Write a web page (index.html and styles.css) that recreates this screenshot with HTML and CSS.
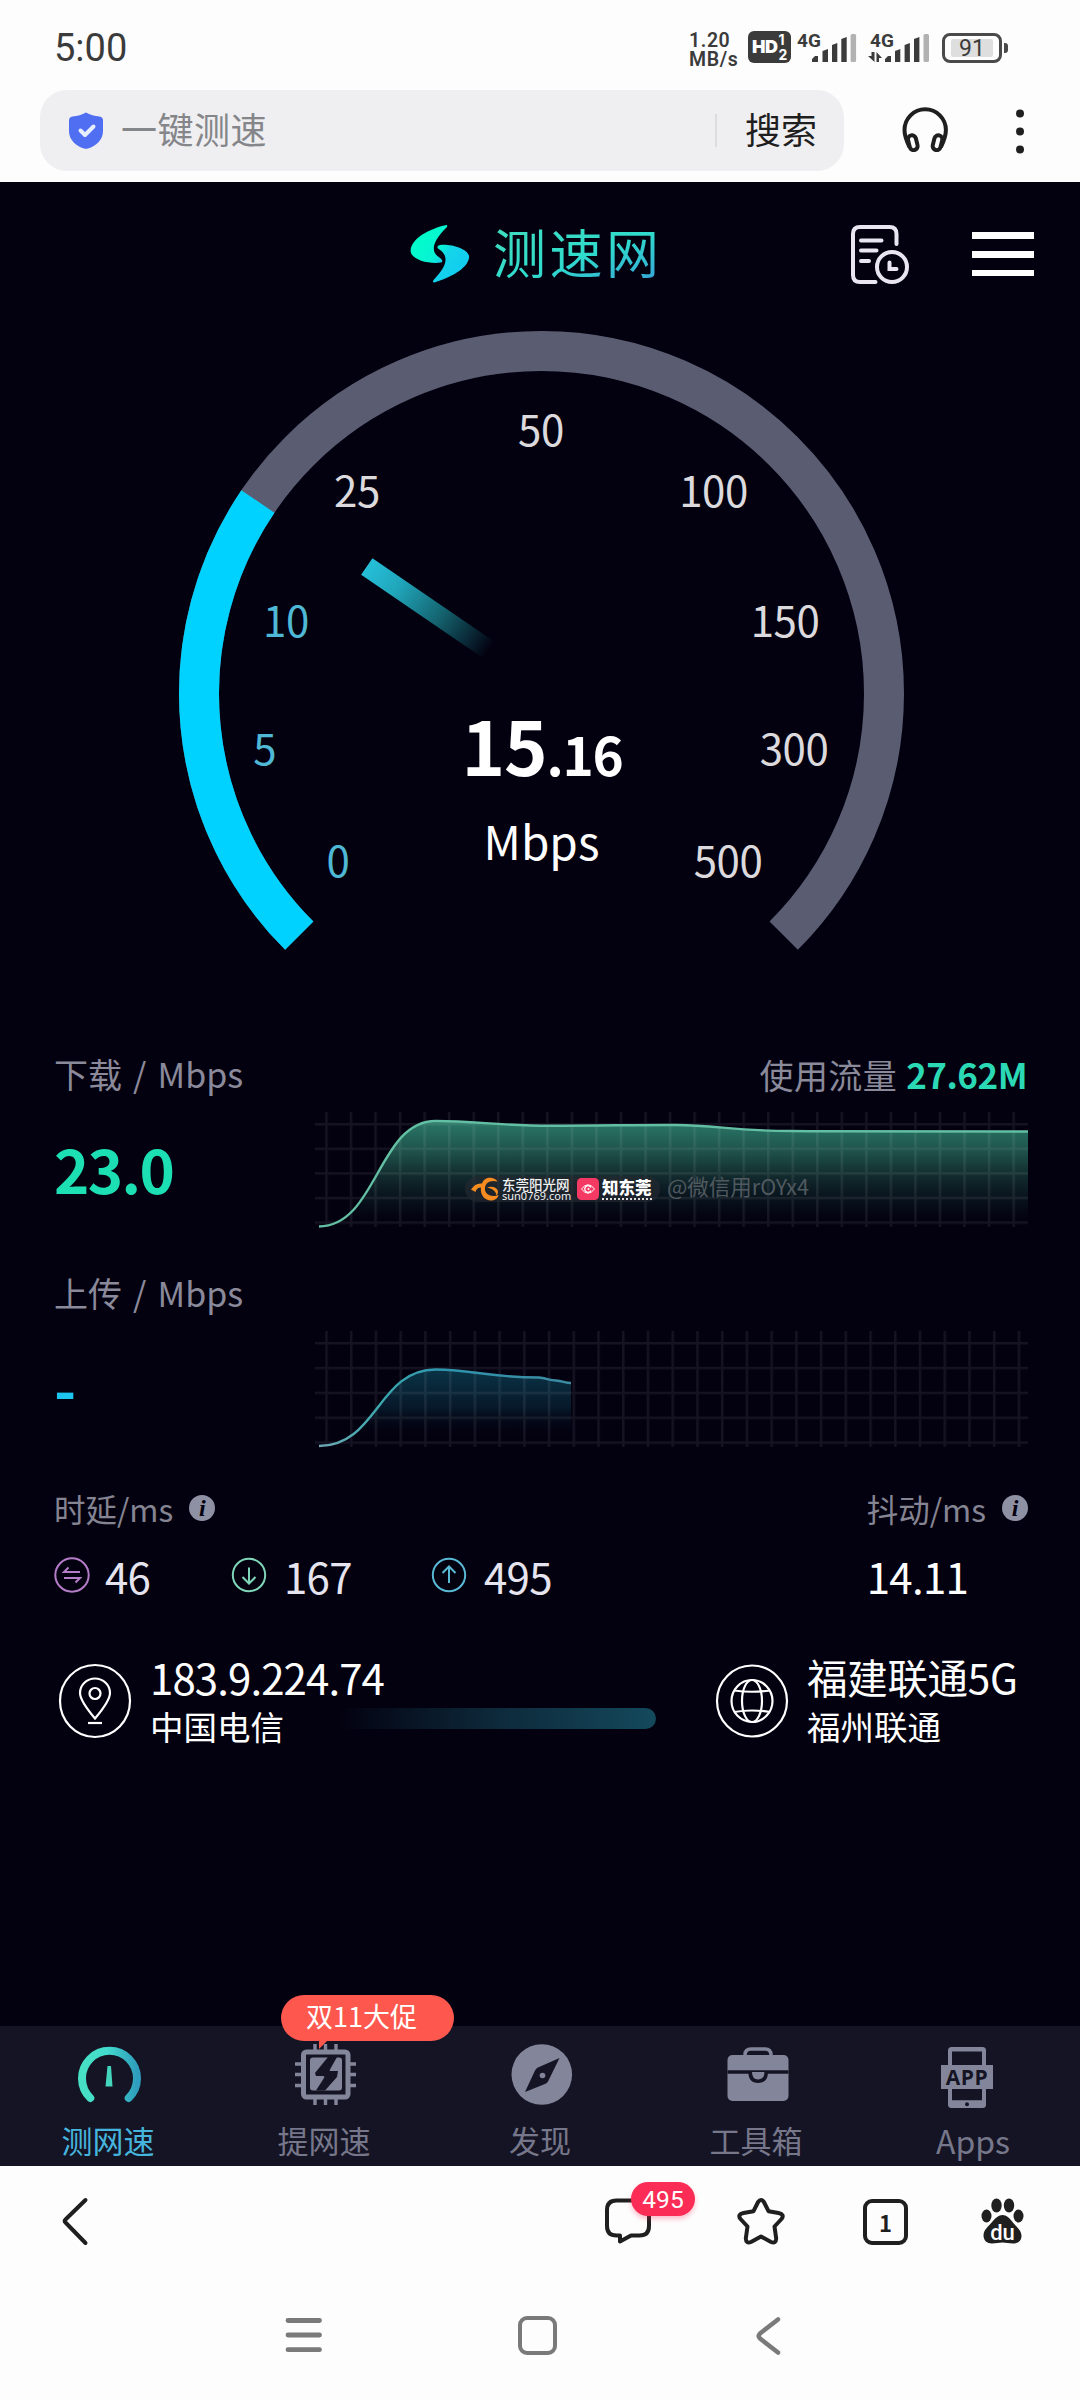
FILE: index.html
```html
<!DOCTYPE html>
<html lang="zh-CN">
<head>
<meta charset="utf-8">
<title>测速网</title>
<link rel="stylesheet" href="styles.css">
</head>
<body>
<div class="status">
  <span class="clock">5:00</span>
  <div class="rate"><span>1.20</span><span>MB/s</span></div>
  <div class="hd"><b>HD</b><div class="hd-n"><i>1</i><i>2</i></div></div>
  <svg class="sig" width="60" height="32" viewBox="797 31 60 32">
    <text x="797" y="46.500" class="net">4G</text>
    <g fill="#3b3b3b"><path d="M812 62v-3l3-3h3v6zM822.500 62V51l5.500-2v13zM832 62V45l5.300-2v19zM841.300 62V39l5.400-2v25z"/></g><rect x="850.600" y="34" width="5.500" height="28" rx="1.500" fill="#b2b2b2"/>
  </svg>
  <svg class="sig2" width="62" height="32" viewBox="868 31 62 32">
    <text x="870" y="46.500" class="net">4G</text>
    <g fill="#3b3b3b"><path d="M885 62v-3l3-3h3v6zM895 62V51l5.300-2v13zM904.600 62V45l5.300-2v19zM914 62V39l5.400-2v25z"/><path d="M871.500 52h3v10l-6.500-6h3.500zM876.500 52l5.500 6h-3v4h-2.500z"/></g><rect x="923.500" y="34" width="5.500" height="28" rx="1.500" fill="#b2b2b2"/>
  </svg>
  <div class="battery"><span>91</span></div><i class="knob"></i>
</div>

<div class="address">
  <div class="search">
    <svg class="shield" width="34" height="37" viewBox="0 0 34 37"><path d="M17 0.500Q23 4 30.500 4.500Q34 5 34 8.500V19C34 28 27 34 19 36.500Q17 37.200 15 36.500C7 34 0 28 0 19V8.500Q0 5 3.500 4.500Q11 4 17 .500z" fill="#4f6ef2"/><path d="M11.500 18.500l4.500 4.500 8.500-8.500" fill="none" stroke="#e6edff" stroke-width="4" stroke-linecap="round" stroke-linejoin="round"/></svg>
    <span class="query">一键测速</span>
    <i class="sep"></i>
    <span class="go">搜索</span>
  </div>
  <svg class="phones" width="46" height="46" viewBox="902 107 46 46" fill="none" stroke="#1f1f1f" stroke-width="4"><path d="M909.500 147c-3-6-5-11-5-17a20.700 20.700 0 0 1 41.400 0c0 6-2 11-5 17"/><rect x="-4" y="-7.500" width="8" height="15" rx="4" transform="translate(912.800 142.700) rotate(-14)"/><rect x="-4" y="-7.500" width="8" height="15" rx="4" transform="translate(937.500 142.700) rotate(14)"/></svg>
  <svg width="8" height="46" viewBox="0 0 8 46" fill="#1f1f1f"><circle cx="4" cy="5.500" r="4"/><circle cx="4" cy="23.500" r="4"/><circle cx="4" cy="41.500" r="4"/></svg>
</div>

<main class="app">
  <header class="brand">
    <svg class="mark" width="60" height="60" viewBox="410 224 60 60">
      <defs><linearGradient id="gm" gradientUnits="userSpaceOnUse" x1="415" y1="235" x2="462" y2="275"><stop offset="0" stop-color="#00ffc8"/><stop offset=".45" stop-color="#08f2d4"/><stop offset=".6" stop-color="#14d4ea"/><stop offset="1" stop-color="#12ccf0"/></linearGradient></defs>
      <g fill="url(#gm)"><path d="M446.500 225C436 227 411 236 410.600 251C411 260 430 264.500 441 262.500C443 262 442.500 259.500 440 258C430 252 432 242 446.500 227.500Q448 225.500 446.500 225z"/><path d="M438 248.500C436.500 246.500 438 245 442 244.800C455 244.500 469 250 469.200 257C468 269 449 278 434.500 282.500Q431.500 282.500 434 279.500C444 269 452 257 438 248.500z"/></g>
    </svg>
    <h1>测速网</h1>
    <svg class="report" width="60" height="60" viewBox="850 224 60 60" fill="none" stroke="#e9e6f2" stroke-width="4" stroke-linecap="round"><path d="M896.500 244v-10q0-7-7-7H860q-7 0-7 7v41q0 7 7 7h15.500"/><path d="M861 240.500h20.500M861 250.500h15.500M861 261h8"/><circle cx="892" cy="267" r="15"/><path d="M889.500 262.500v6.500h7"/></svg>
    <div class="burger"><i></i><i></i><i></i></div>
  </header>

  <svg class="gauge" width="1080" height="654" viewBox="0 326 1080 654">
    <defs><linearGradient id="gn" x1="0" x2="1"><stop offset="0" stop-color="#25bfd8"/><stop offset=".25" stop-color="#20a6bb"/><stop offset=".6" stop-color="#14636f"/><stop offset="1" stop-color="#14636f" stop-opacity="0"/></linearGradient></defs>
    <g fill="none" stroke-width="40">
      <path d="M299.300 935.700A342.500 342.500 0 1 1 783.700 935.700" stroke="#5a5c71"/>
      <path d="M299.300 935.700A342.500 342.500 0 0 1 257.900 501.500" stroke="#00d2ff"/>
    </g>
    <rect x="0" y="-10" width="148" height="20" fill="url(#gn)" transform="translate(366.800 566.500) rotate(34.400)"/>
    <g class="ticks">
      <text x="541" y="445.500">50</text><text x="357" y="507">25</text><text x="713.500" y="507">100</text>
      <text x="785" y="637">150</text><text x="794" y="764.500">300</text><text x="728" y="877">500</text>
      <g class="on"><text x="286" y="637">10</text><text x="264.700" y="764.500">5</text><text x="338" y="877">0</text></g>
    </g>
    <text class="speed" x="542" y="776">15<tspan class="frac">.16</tspan></text>
    <text class="unit" x="541.500" y="860">Mbps</text>
  </svg>

  <section class="metric down">
    <div class="head"><span>下载 / Mbps</span><span>使用流量 <b>27.62M</b></span></div>
    <div class="body">
      <strong>23.0</strong>
      <div class="plot">
      <svg width="716" height="120" viewBox="314 1110 716 120">
        <defs>
          <pattern id="g1" x="325.250" y="1123" width="24.540" height="24.600" patternUnits="userSpaceOnUse"><path d="M1.250 0V24.600M0 1.250H24.540" stroke="#fff" stroke-opacity=".07" stroke-width="2.500"/></pattern>
          <linearGradient id="f1" x1="0" y1="0" x2="0" y2="1"><stop offset="0" stop-color="#2a7868"/><stop offset=".3" stop-color="#1e5049"/><stop offset=".52" stop-color="#122b2e"/><stop offset=".8" stop-color="#08121c" stop-opacity=".7"/><stop offset="1" stop-color="#030110" stop-opacity="0"/></linearGradient>
        </defs>
        <path d="M319 1226.500C377 1226 378 1121 435.600 1121C475 1121 500 1125.700 550 1125.700C600 1125.700 640 1124.800 676 1125C715 1125 735 1131 790 1131C840 1131.500 870 1131.800 1028 1131.500V1226.500z" fill="url(#f1)"/>
        <rect x="315" y="1112" width="713" height="115" fill="url(#g1)"/>
        <path d="M319 1226.500C377 1226 378 1121 435.600 1121C475 1121 500 1125.700 550 1125.700C600 1125.700 640 1124.800 676 1125C715 1125 735 1131 790 1131C840 1131.500 870 1131.800 1028 1131.500" fill="none" stroke="#63bfa3" stroke-width="2.400"/>
      </svg>
      <div class="wm">
        <div class="pill">
          <svg width="28" height="24" viewBox="0 0 28 24" fill="#f68b1f"><path d="M26.500 4.500C23-1 13-.500 11 6.500C6 6 3 8 0 12.500L4.500 15C5 12.500 7 10.500 10 10.500C9 17 13 23.500 20 23.500C24 23.500 27 21 27.500 18C20 21 13.500 17 14 11.500C14 6 19 2.500 26.500 4.500z"/><path d="M16 10.500C20 9 26 10 27 14.500Q27 17 25.500 18.500C25 14 21 11.500 16 10.500z"/></svg>
          <div class="site"><span>东莞阳光网</span><small>sun0769.com</small></div>
          <svg class="eye" width="22" height="22" viewBox="0 0 22 22" fill="none" stroke="#fff"><rect width="22" height="22" rx="4.500" fill="#f43a63" stroke="none"/><path d="M4.500 11Q11 2.500 17.500 11Q11 19.500 4.500 11z" stroke-width="1"/><path d="M14 9.500a3.300 3.300 0 1 0 0 3" stroke-width="1.300"/><circle cx="11.500" cy="11" r="1" fill="#fff" stroke="none"/></svg>
          <span class="zhi">知东莞</span>
        </div>
        <span class="user">@微信用rOYx4</span>
      </div>
      </div>
    </div>
  </section>

  <section class="metric up">
    <div class="head"><span>上传 / Mbps</span></div>
    <div class="body">
      <strong>-</strong>
      <div class="plot">
      <svg width="716" height="120" viewBox="314 1329 716 120">
        <defs>
          <pattern id="g2" x="325.250" y="1342" width="24.730" height="24.850" patternUnits="userSpaceOnUse"><path d="M1.250 0V24.850M0 1.250H24.730" stroke="#fff" stroke-opacity=".07" stroke-width="2.500"/></pattern>
          <linearGradient id="f2" x1="0" y1="0" x2="0" y2="1"><stop offset="0" stop-color="#0a3346"/><stop offset=".5" stop-color="#07182a"/><stop offset=".9" stop-color="#030110" stop-opacity="0"/></linearGradient>
          <linearGradient id="s2"><stop offset="0" stop-color="#6fa7b3"/><stop offset=".25" stop-color="#3aa8ac"/><stop offset=".5" stop-color="#2f93ad"/><stop offset="1" stop-color="#3c8ba3"/></linearGradient>
        </defs>
        <path d="M319 1446C377 1446 378 1369.500 435.600 1369.500C475 1370 490 1377.500 539 1377.500C550 1379 548 1380 556 1380.500C563 1381 565 1383 571 1383V1446z" fill="url(#f2)"/>
        <rect x="315" y="1331" width="713" height="116" fill="url(#g2)"/>
        <path d="M319 1446C377 1446 378 1369.500 435.600 1369.500C475 1370 490 1377.500 539 1377.500C550 1379 548 1380 556 1380.500C563 1381 565 1383 571 1383" fill="none" stroke="url(#s2)" stroke-width="2.400"/>
      </svg>
      </div>
    </div>
  </section>

  <section class="ping">
    <div class="latency">
      <div class="cap">时延/ms <em>i</em></div>
      <div class="vals">
        <svg width="36" height="36" viewBox="-18 -18 36 36" fill="none" stroke="#b57cc8" stroke-width="2"><circle r="16.700"/><path d="M8 -3H-8l4.500-4.500M-8 3H8l-4.500 4.500"/></svg><span class="v1">46</span>
        <svg width="36" height="36" viewBox="-18 -18 36 36" fill="none" stroke="#7fd6b8" stroke-width="2"><circle r="16.200"/><path d="M0-7.500V8M-6.500 2L0 8.500 6.500 2"/></svg><span class="v2">167</span>
        <svg width="36" height="36" viewBox="-18 -18 36 36" fill="none" stroke="#5ab9d6" stroke-width="2"><circle r="16.200"/><path d="M0 8V-8M-6.500-2L0-8.500 6.500-2"/></svg><span class="v3">495</span>
      </div>
    </div>
    <div class="jitter">
      <div class="cap">抖动/ms <em>i</em></div>
      <div class="vals"><span>14.11</span></div>
    </div>
  </section>

  <section class="route">
    <svg width="74" height="76" viewBox="-37 -38 74 76" fill="none" stroke="#fff" stroke-width="2.200"><ellipse rx="35" ry="36"/><path d="M0 17.500C-8 8-15-1-15-8a15 14.500 0 0 1 30 0C15-1 8 8 0 17.500z"/><circle cy="-7.500" r="5.500"/><path d="M-7 22H7"/></svg>
    <div class="who from"><p>183.9.224.74</p><small>中国电信</small></div>
    <i class="beam"></i>
    <svg width="74" height="76" viewBox="-37 -38 74 76" fill="none" stroke="#fff" stroke-width="2.200"><ellipse rx="35" ry="35.500"/><ellipse rx="20.500" ry="21"/><ellipse rx="10" ry="21"/><path d="M-18-10.500Q0-8 18-10.500M-18 11Q0 8 18 11"/></svg>
    <div class="who to"><p>福建联通5G</p><small>福州联通</small></div>
  </section>

  <nav class="tabs">
    <a class="tab active">
      <svg width="64" height="64" viewBox="77 2043 64 64"><defs><linearGradient id="gt"><stop offset="0" stop-color="#47e0c4"/><stop offset=".45" stop-color="#43dccd"/><stop offset="1" stop-color="#2f9dbd"/></linearGradient></defs><path d="M90.300 2098A27.500 27.500 0 1 1 128.700 2098" fill="none" stroke="url(#gt)" stroke-width="8" stroke-linecap="round"/><path d="M107.500 2066h3.500l1.500 20.500h-7z" fill="#43d6bd"/></svg>
      <span>测网速</span></a>
    <a class="tab">
      <svg width="64" height="64" viewBox="293 2043 64 64"><g stroke="#83869a" fill="none"><path d="M315 2044v61M325.500 2044v61M336 2044v61M295 2064h61M295 2074.500h61M295 2085.500h61" stroke-width="3.400"/><rect x="303.500" y="2052" width="44.500" height="45" rx="3" fill="#151424" stroke-width="5"/></g><rect x="310" y="2057.500" width="32" height="33" rx="3" fill="#83869a"/><path d="M328 2057h9l-7 12.500q-1 1.500 1 1.500h7l-1 6-12 13.500h-9l8-12.500q1-2-1-2h-7l-1-3z" fill="#151424"/></svg>
      <span>提网速</span>
      <b class="promo">双11大促</b></a>
    <a class="tab">
      <svg width="64" height="64" viewBox="510 2043 64 64"><circle cx="542.800" cy="2074.500" r="30.300" fill="#83869a"/><path d="M560.500 2058L549 2081.500Q548 2083 546 2084L526 2092L536 2070.500Q537 2068.500 539 2067.500z" fill="#151424"/><circle cx="543.500" cy="2075.500" r="2.800" fill="#83869a"/></svg>
      <span>发现</span></a>
    <a class="tab">
      <svg width="64" height="64" viewBox="725.500 2043 64 64"><path d="M745.500 2058v-3q0-6 6-6h14q6 0 6 6v3" fill="none" stroke="#83869a" stroke-width="3.500"/><rect x="728" y="2055" width="61" height="46" rx="5" fill="#83869a"/><path d="M728 2072h61" stroke="#151424" stroke-width="3.600"/><path d="M750.700 2072q0 9.200 8 9.200t8-9.200" fill="#83869a" stroke="#151424" stroke-width="3.600"/></svg>
      <span>工具箱</span></a>
    <a class="tab">
      <svg width="64" height="66" viewBox="936 2043 64 66"><rect x="948" y="2047" width="38" height="61" rx="3.500" fill="#83869a"/><path d="M952 2051.500h30V2066h-30zM952 2088h30v12.300h-30z" fill="#151424"/><circle cx="967" cy="2104.200" r="2" fill="#151424"/><rect x="941" y="2065" width="52" height="24" fill="#83869a"/><text x="967" y="2084.500" class="apptext">APP</text></svg>
      <span>Apps</span></a>
  </nav>
</main>

<footer class="toolbar">
  <svg width="30" height="52" viewBox="60 2195 30 52" fill="none" stroke="#1f1f1f" stroke-width="4" stroke-linecap="round" stroke-linejoin="round"><path d="M85.500 2200L65.500 2219.500q-1.500 1.500 0 3L85.500 2243"/></svg>
  <div class="chat"><svg width="50" height="52" viewBox="603 2195 50 52" fill="none" stroke="#1f1f1f" stroke-width="4" stroke-linejoin="round"><path d="M616.500 2200.500h23q9.500 0 9.500 9.500v16q0 9.500-9.500 9.500h-8.500l-11 6v-6h-3.500q-9.500 0-9.500-9.500v-16q0-9.500 9.500-9.500z"/></svg><b>495</b></div>
  <svg class="star" width="54" height="52" viewBox="734 2195 54 52" fill="none" stroke="#1f1f1f" stroke-width="4" stroke-linejoin="round"><path d="M758.100 2202Q761 2198 763.900 2202L768.500 2211.200L778.500 2213Q785 2214.500 781.500 2219L774.500 2226.500L776.200 2238.500Q776 2244 771 2242L761 2236.500L751 2242Q746 2244 745.800 2238.500L747.500 2226.500L740.500 2219Q737 2214.500 743.500 2213L753.500 2211.200z"/></svg>
  <div class="pages">1</div>
  <svg class="paw" width="46" height="50" viewBox="980 2197 46 50" fill="#1f1f1f"><ellipse cx="986.500" cy="2216" rx="5" ry="6.500"/><ellipse cx="996.500" cy="2205.500" rx="5.200" ry="7"/><ellipse cx="1009" cy="2205.500" rx="5.200" ry="7"/><ellipse cx="1018.500" cy="2216" rx="5" ry="6.500"/><path d="M1002.500 2215c4 0 7 3 10 7c4 5 9 8 9 14c0 5-4 7.500-8.500 7.500c-4 0-7-1-10.500-1s-6.500 1-10.500 1c-5 0-8.500-3-8.500-8c0-6 5-9 9-14c3-3.500 6-6.500 10-6.500z"/><text x="1002.500" y="2240" class="du">du</text></svg>
</footer>
<div class="sysnav">
  <svg width="38" height="40" viewBox="0 0 38 40" stroke="#7a7a7a" stroke-width="4.800" stroke-linecap="round"><path d="M3 5.500H34.500M3 20H34.500M3 34.700H34.500"/></svg>
  <i class="home"></i>
  <svg class="back" width="28" height="42" viewBox="756 2314 28 42" fill="none" stroke="#7a7a7a" stroke-width="4.500" stroke-linecap="round" stroke-linejoin="round"><path d="M778 2318.500L760 2332.500q-2.500 2.500 0 5L778 2351.500"/></svg>
</div>
</body>
</html>
```

FILE: styles.css
```css
* { box-sizing: border-box; }
body {
  margin: 0;
  width: 1080px;
  height: 2400px;
  overflow: hidden;
  background: #fdfdfd;
  font-family: "Noto Sans CJK SC", "Noto Sans", sans-serif;
  display: flex;
  flex-direction: column;
}
i, em { font-style: normal; }
svg, i { display: block; flex: none; }
h1, p { margin: 0; }

/* status bar */
.status { height: 90px; display: flex; align-items: flex-start; padding: 31px 0 0 54px; color: #3b3b3b; font-family: Roboto, sans-serif; }
.clock { font-size: 38px; line-height: 34px; width: 635px; font-weight: 400; }
.rate { width: 59px; padding-top: 0; display: flex; flex-direction: column; font: 600 19.500px/19px Roboto, sans-serif; letter-spacing: .6px; }
.hd { width: 43px; height: 32px; margin-right: 6px; background: #3b3b3b; color: #fff; border-radius: 6px; display: flex; padding-left: 4px; align-items: center; font: 700 18px/32px Inter, sans-serif; letter-spacing: -.5px; }
.hd-n { font-size: 14px; line-height: 14px; margin-left: 1px; }
.hd-n i { line-height: 15px; }
.sig { margin-right: 11px; }
.sig, .sig2 { overflow: visible; }
.net { font: 700 19px Roboto, sans-serif; fill: #3b3b3b; }
.battery { margin: 2px 2px 0 12px; width: 60px; height: 30px; border: 3px solid #4a4a4a; border-radius: 8px; display: flex; align-items: center; justify-content: center; font: 400 23px/24px Roboto, sans-serif; }
.battery span { width: 42px; height: 18px; line-height: 19px; border-radius: 2px; background: #dedede; text-align: center; }
.knob { width: 4px; height: 10px; margin-top: 12px; background: #4a4a4a; border-radius: 0 3px 3px 0; }

/* address row */
.address { height: 92px; display: flex; align-items: flex-start; padding-left: 40px; }
.search { width: 804px; height: 81px; border-radius: 27px; background: #efeff1; display: flex; align-items: center; padding-left: 29px; margin-right: 58px; }
.query, .go { font-size: 36px; line-height: 40px; margin-top: -5px; }
.query { color: #85868a; margin-left: 18px; width: 594px; letter-spacing: .5px; }
.sep { width: 2px; height: 33px; background: #dcdcdf; margin-right: 28px; }
.go { color: #1f1f1f; }
.phones { margin: 17px 68px 0 0; }
.phones + svg { margin-top: 18px; }

/* speed test app */
.app { height: 1984px; background: #030110; color: #fff; display: flex; flex-direction: column; }
.brand { height: 144px; display: flex; align-items: flex-start; padding: 42px 0 0 410px; }
.brand h1 { width: 357px; margin: -3px 0 0 23px; font-size: 53px; line-height: 60px; font-weight: 400; letter-spacing: 3.500px; color: transparent; background: linear-gradient(160deg, #3fdcc0 10%, #30dccb 55%, #35a9d8 95%) 0 0 / 170px 100% no-repeat; -webkit-background-clip: text; background-clip: text; }
.burger { width: 62px; margin: 8px 0 0 62px; display: flex; flex-direction: column; gap: 12px; }
.burger i { height: 6.800px; background: #fff; }
.gauge { height: 654px; }
.gauge text { text-anchor: middle; }
.ticks { font-size: 42px; fill: #dcdadd; letter-spacing: -.4px; }
.ticks .on { fill: #4fb8d4; }
.speed { font-size: 74px; font-weight: 700; fill: #fff; letter-spacing: -1.200px; }
.frac { font-size: 53px; }
.unit { font-size: 46px; fill: #fff; }

.metric { height: 219px; padding: 67px 53px 0 54px; }
.metric .head { display: flex; justify-content: space-between; height: 63px; line-height: 54px; font-size: 34px; color: #8a8a9a; word-spacing: 3.500px; }
.head span:last-child:not(:first-child) { letter-spacing: .4px; word-spacing: 1px; }
.head b { color: #2bd9b5; font-size: 35px; letter-spacing: -.5px; }
.metric .body { display: flex; }
.body strong { flex: none; width: 260px; font-size: 60px; line-height: 116px; color: #1ce0b4; letter-spacing: -1.600px; }
.up strong { color: #1cc4ee; }
.plot { position: relative; flex: none; }
.wm { position: absolute; left: 151px; top: 66px; display: flex; align-items: center; height: 26px; }
.pill { display: flex; align-items: center; width: 195px; height: 26px; padding-left: 6px; border-radius: 13px; background: rgba(38, 42, 50, .6); }
.site { width: 68px; margin-left: 3px; display: flex; flex-direction: column; color: #f2f2f2; white-space: nowrap; font-size: 13.500px; line-height: 14px; font-weight: 500; }
.site small { font: 400 11px/10px "Noto Sans", sans-serif; }
.eye { margin: 0 3px 0 7px; }
.zhi { font-size: 16.500px; line-height: 16px; font-weight: 900; height: 21px; border-bottom: 2px dotted #ddd; }
.user { margin: -6px 0 0 7px; font-size: 21.500px; line-height: 26px; color: #50595f; white-space: nowrap; }

.ping { display: flex; justify-content: space-between; padding: 68px 52px 0 54px; height: 217px; }
.latency, .jitter { display: flex; flex-direction: column; }
.cap { display: flex; align-items: center; height: 44px; font-size: 31.500px; color: #858492; }
.cap em { width: 26px; height: 26px; margin-left: 16px; border-radius: 50%; background: #8e90a4; color: #030110; font: italic 700 24px/26px "Liberation Serif", serif; text-align: center; }
.vals { display: flex; align-items: center; height: 60px; margin-top: 16px; font-size: 42px; line-height: 60px; color: #e6e4ee; letter-spacing: -.7px; }
.vals svg { margin-top: -3px; }
.v1 { width: 126px; margin-left: 15px; }
.v2 { width: 147px; margin-left: 17px; }
.v3 { margin-left: 17px; }
.jitter .vals { color: #fff; }

.route { height: 391px; padding: 0 0 0 58px; display: flex; align-items: flex-start; }
.route > svg { margin-top: 28px; }
.who { margin-left: 18px; width: 260px; white-space: nowrap; }
.who p { font-size: 42px; line-height: 48px; margin-top: 18px; letter-spacing: -.9px; }
.who.to p { font-size: 40.500px; letter-spacing: -.3px; }
.who small { display: block; font-size: 33.500px; line-height: 48px; margin-top: 1px; }
.who.from { width: 190px; }
.beam { width: 316px; height: 21px; margin: 73px 59px 0 0; border-radius: 0 11px 11px 0; background: linear-gradient(90deg, rgba(20, 74, 92, 0) 0, rgba(20, 74, 92, .1) 8%, #0d2a3b 50%, #14495c); }

.tabs { height: 140px; background: #151424; display: flex; }
.tab { position: relative; width: 216px; display: flex; flex-direction: column; align-items: center; padding: 17px 0 0 2px; font-size: 31px; line-height: 40px; color: #76778a; }
.tab span { margin-top: 13px; margin-left: -2px; }
.tab:last-child { padding-left: 0; padding-right: 8px; }
.tab:last-child span { margin: 11px 0 0 10px; font-size: 32px; }
.tab.active { color: #45b5dd; }
.promo { position: absolute; left: 65px; top: -31px; width: 173px; height: 46px; padding-left: 25px; border-radius: 23px; background: #fe574e; color: #fff; font-size: 27px; line-height: 42px; font-weight: 400; }
.promo::after { content: ""; position: absolute; left: 38px; top: 45px; border-top: 9px solid #fe574e; border-right: 9px solid transparent; }
.apptext { font: 700 21px "Open Sans", sans-serif; text-anchor: middle; fill: #151424; letter-spacing: .5px; }

/* browser toolbar and system navigation */
.toolbar { height: 134px; padding: 29px 0 0 60px; display: flex; align-items: flex-start; }
.chat { position: relative; margin-left: 513px; }
.chat b { position: absolute; left: 28px; top: -13px; width: 64px; height: 34px; border-radius: 17px; background: #fb2c55; color: #fff; font: 400 24.500px/35px Roboto, sans-serif; text-align: center; box-shadow: 0 3px 5px rgba(251, 44, 85, .3); }
.star { margin-left: 81px; }
.pages { width: 45px; height: 46px; margin: 4px 73px 0 75px; border: 4px solid #1f1f1f; border-radius: 9px; font: 700 22px/38px "Noto Sans CJK SC", sans-serif; text-align: center; color: #1f1f1f; }
.paw { margin-top: 2px; margin-left: -1px; }
.du { font: 500 22px Roboto, sans-serif; fill: #fff; text-anchor: middle; }
.sysnav { height: 100px; display: flex; align-items: flex-start; padding: 15px 0 0 285px; }
.home { width: 39px; height: 39px; margin: 1px 199px 0 195px; border: 4.500px solid #7a7a7a; border-radius: 9px; }
```
